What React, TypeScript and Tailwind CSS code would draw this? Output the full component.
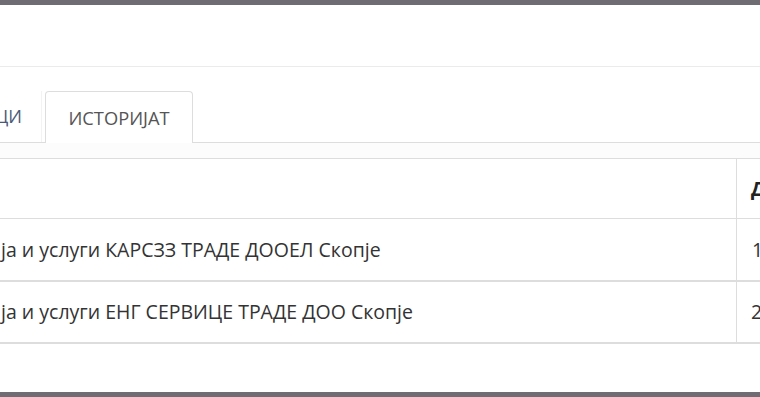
import React from "react";

export default function App() {
  const font = { fontFamily: '"Open Sans", "Noto Sans", sans-serif' };
  return (
    <div className="w-[760px] h-[397px] bg-white flex flex-col overflow-hidden" style={font}>
      <div className="h-[5px] bg-[#6f6d73] shrink-0" />
      <div className="h-[62px] shrink-0 border-b border-[#ebebeb]" />
      <div className="h-[24px] shrink-0" />
      <div className="flex items-end border-b border-[#dddddd] h-[52px] shrink-0">
        <div className="w-[42px] h-[51px] flex items-center overflow-hidden whitespace-nowrap border-r border-[#f3f3f3] text-[18px] text-[#4a5a7a]">
          <span className="-ml-[5px]">ЦИ</span>
        </div>
        <div className="ml-[3px] h-[52px] -mb-[1px] bg-white border border-b-0 border-[#dddddd] rounded-t-[4px] w-[148px] flex items-center justify-center text-[18.3px] text-[#555555]">
          ИСТОРИЈАТ
        </div>
      </div>
      <div className="h-[15px] shrink-0 bg-[#fcfcfc]" />
      <div className="border-t border-[#dddddd] text-[19.5px] text-[#333333]">
        <div className="flex h-[60px] border-b border-[#dddddd]">
          <div className="flex-1" />
          <div className="w-[24px] border-l border-[#dddddd] flex items-center pl-[14px] font-bold text-[#222] whitespace-nowrap overflow-hidden">
            Датум
          </div>
        </div>
        <div className="flex h-[63px] border-b-2 border-[#dddddd]">
          <div className="flex-1 flex items-center pl-[1px] whitespace-nowrap">
            ја и услуги КАРСЗЗ ТРАДЕ ДООЕЛ Скопје
          </div>
          <div className="w-[24px] border-l border-[#dddddd] flex items-center pl-[15px] whitespace-nowrap overflow-hidden">
            12
          </div>
        </div>
        <div className="flex h-[62px] border-b-2 border-[#dddddd]">
          <div className="flex-1 flex items-center pl-[1px] whitespace-nowrap">
            ја и услуги ЕНГ СЕРВИЦЕ ТРАДЕ ДОО Скопје
          </div>
          <div className="w-[24px] border-l border-[#dddddd] flex items-center pl-[14px] whitespace-nowrap overflow-hidden">
            22
          </div>
        </div>
      </div>
      <div className="flex-1" />
      <div className="h-[5px] bg-[#6f6d73] shrink-0" />
    </div>
  );
}
